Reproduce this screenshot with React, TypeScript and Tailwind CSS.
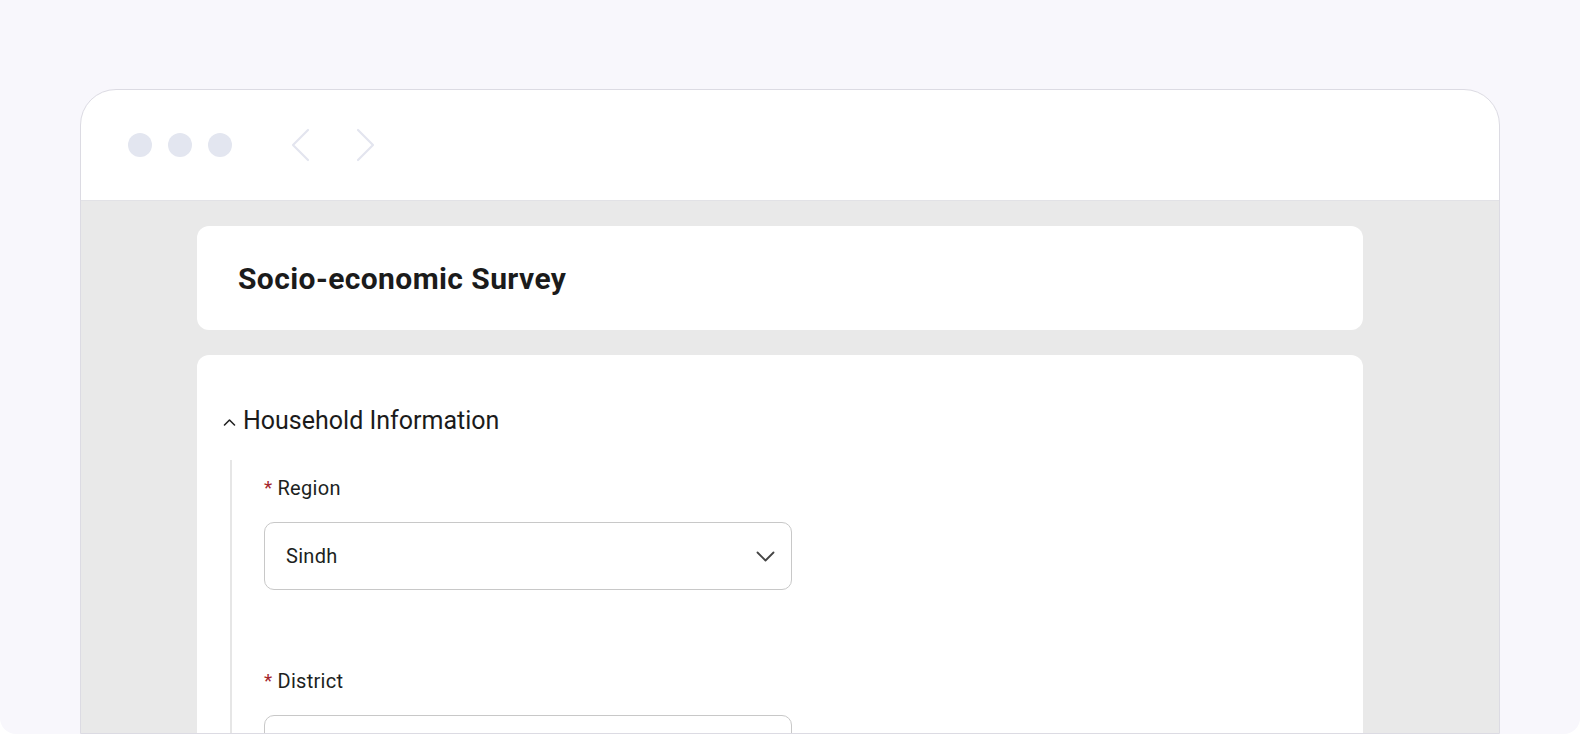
import { FC } from "react";

const ChevronLeft: FC = () => (
  <svg width="20" height="34" viewBox="0 0 20 34" fill="none">
    <path d="M18 2 L3 17 L18 32" stroke="#e3e5ef" strokeWidth="2.2" strokeLinecap="round" strokeLinejoin="round" />
  </svg>
);

const ChevronRight: FC = () => (
  <svg width="20" height="34" viewBox="0 0 20 34" fill="none">
    <path d="M2 2 L17 17 L2 32" stroke="#e3e5ef" strokeWidth="2.2" strokeLinecap="round" strokeLinejoin="round" />
  </svg>
);

interface FieldProps {
  label: string;
  value?: string;
}

const SelectField: FC<FieldProps> = ({ label, value }) => {
  return (
    <div className="flex flex-col">
      <label className="flex items-center h-[26px] text-[20px] tracking-[0.3px] text-[#201f1e]">
        <span className="text-[#a4262c] mr-[5px] text-[19px]">*</span>
        {label}
      </label>
      <div className="mt-[21px] w-[528px] h-[68px] rounded-[10px] border border-[#c8c8c8] bg-white flex items-center justify-between pl-[21px] pr-[16px]">
        <span className="text-[20px] tracking-[0.3px] text-[#201f1e]">{value}</span>
        <svg width="19" height="11" viewBox="0 0 19 11" fill="none">
          <path d="M1.5 1.5 L9.5 9.5 L17.5 1.5" stroke="#444" strokeWidth="1.8" strokeLinecap="round" strokeLinejoin="round" />
        </svg>
      </div>
    </div>
  );
};

export default function App() {
  return (
    <div className="bg-white" style={{ fontFamily: "Roboto, 'Liberation Sans', sans-serif" }}>
      <div className="h-[734px] w-[1580px] bg-[#f8f7fc] rounded-b-[16px] overflow-hidden pt-[89px] px-[80px]">
        <div className="h-[645px] border border-[#dcdbe3] rounded-t-[36px] bg-white overflow-hidden flex flex-col">
          {/* window chrome */}
          <div className="h-[111px] shrink-0 border-b border-[#e2e2e6] flex items-center pl-[47px]">
            <div className="flex gap-4">
              <div className="w-6 h-6 rounded-full bg-[#e3e6f0]" />
              <div className="w-6 h-6 rounded-full bg-[#e3e6f0]" />
              <div className="w-6 h-6 rounded-full bg-[#e3e6f0]" />
            </div>
            <div className="ml-[58px] flex gap-[46px] items-center">
              <ChevronLeft />
              <ChevronRight />
            </div>
          </div>

          {/* page */}
          <div className="flex-1 bg-[#e9e9e9] pt-[25px] pl-[116px]">
            <div className="w-[1166px] flex flex-col gap-[25px]">
              <div className="h-[104px] rounded-[12px] bg-white flex items-center pl-[41px]">
                <h1 className="text-[30px] font-bold text-[#1b1b1b] tracking-[0.4px]">Socio-economic Survey</h1>
              </div>

              <div className="rounded-[12px] bg-white pt-[50px] h-[500px]">
                <div className="flex items-center h-[32px] pl-[26px]">
                  <svg width="13" height="9" viewBox="0 0 13 9" fill="none" className="mr-[7px] mt-[2px]">
                    <path d="M1.5 7 L6.5 2 L11.5 7" stroke="#222" strokeWidth="1.6" strokeLinecap="round" strokeLinejoin="round" />
                  </svg>
                  <span className="text-[25px] text-[#1b1b1b]">Household Information</span>
                </div>
                <div className="mt-[23px] ml-[33px] border-l-2 border-[#e6e6e6] pl-[32px] pt-[15px] flex flex-col gap-[78px] h-[400px]">
                  <SelectField label="Region" value="Sindh" />
                  <SelectField label="District" />
                </div>
              </div>
            </div>
          </div>
        </div>
      </div>
    </div>
  );
}
